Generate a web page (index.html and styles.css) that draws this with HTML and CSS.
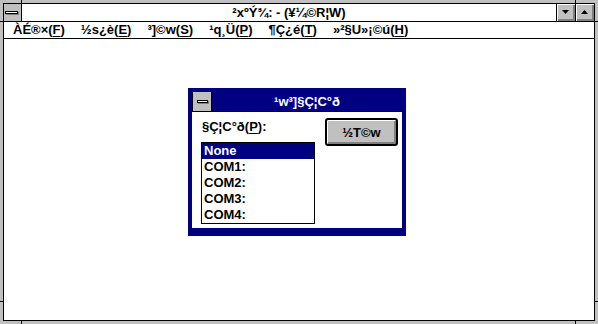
FILE: index.html
```html
<!DOCTYPE html>
<html>
<head>
<meta charset="utf-8">
<link rel="stylesheet" href="styles.css">
</head>
<body>
<div class="screen">
  <div class="window">
    <div class="caption">
      <div class="sysbox"><div class="sysbar"></div></div>
      <div class="title">²xºÝ¾: - (¥¼©R¦W)</div>
      <div class="capbtn">
        <svg width="7" height="4" viewBox="0 0 7 4"><polygon points="0,0 7,0 3.5,4" fill="#000"/></svg>
      </div>
      <div class="capbtn">
        <svg width="7" height="4" viewBox="0 0 7 4"><polygon points="0,4 7,4 3.5,0" fill="#000"/></svg>
      </div>
    </div>
    <div class="menubar">
      <span class="menu-item">ÀÉ®×(<u>F</u>)</span>
      <span class="menu-item">½s¿è(<u>E</u>)</span>
      <span class="menu-item">³]©w(<u>S</u>)</span>
      <span class="menu-item">¹q¸Ü(<u>P</u>)</span>
      <span class="menu-item">¶Ç¿é(<u>T</u>)</span>
      <span class="menu-item">»²§U»¡©ú(<u>H</u>)</span>
    </div>
    <div class="client"></div>
  </div>

  <div class="tick tick-v tick-top tick-l"></div>
  <div class="tick tick-v tick-top tick-r"></div>
  <div class="tick tick-v tick-bottom tick-l"></div>
  <div class="tick tick-v tick-bottom tick-r"></div>
  <div class="tick tick-h tick-left tick-t"></div>
  <div class="tick tick-h tick-left tick-b"></div>
  <div class="tick tick-h tick-right tick-t"></div>
  <div class="tick tick-h tick-right tick-b"></div>

  <div class="dialog">
    <div class="dcaption">
      <div class="dsys"><div class="dsysbar"></div></div>
      <div class="dtitle">¹w³]§Ç¦C°ð</div>
    </div>
    <div class="dbody">
      <div class="dleft">
        <div class="dlabel">§Ç¦C°ð(<u>P</u>):</div>
        <div class="list">
          <div class="item sel">None</div>
          <div class="item">COM1:</div>
          <div class="item">COM2:</div>
          <div class="item">COM3:</div>
          <div class="item">COM4:</div>
        </div>
      </div>
      <div class="okbtn">½T©w</div>
    </div>
  </div>
</div>
</body>
</html>
```

FILE: styles.css
```css
* { box-sizing: border-box; }
body { margin: 0; }

.screen {
  width: 598px;
  height: 324px;
  background: #c0c0c0;
  padding: 3px;
  position: relative;
  overflow: hidden;
  font-family: "Liberation Sans", Arial, sans-serif;
  font-weight: bold;
  font-size: 13px;
  color: #000;
}

.window {
  height: 100%;
  border: 1px solid #000;
  display: flex;
  flex-direction: column;
  background: #fff;
}

.caption {
  height: 18px;
  flex: none;
  display: flex;
  border-bottom: 1px solid #000;
}

.sysbox {
  width: 18px;
  border-right: 1px solid #000;
  background: #c0c0c0;
  display: flex;
  align-items: center;
  padding-left: 1px;
}

.sysbar {
  width: 13px;
  height: 3px;
  border: 1px solid #000;
  background: #fff;
  box-shadow: 1px 1px 0 #808080;
}

.title {
  flex: 1;
  text-align: center;
  line-height: 17px;
  white-space: nowrap;
}

.capbtn {
  width: 19px;
  border-left: 1px solid #000;
  background: #c0c0c0;
  box-shadow: inset 1px 1px #fff, inset -1px -1px #808080, inset -2px -2px #808080;
  display: flex;
  align-items: center;
  justify-content: center;
  padding: 0 1px 1px 0;
}

.capbtn svg { display: block; }

.menubar {
  height: 17px;
  flex: none;
  display: flex;
  border-bottom: 1px solid #000;
  line-height: 15px;
  padding-left: 1px;
  white-space: nowrap;
}

.menu-item { padding: 0 8px; }

u { text-decoration-thickness: 1px; text-underline-offset: 2px; }

.client { flex: 1; background: #fff; }

.tick { position: absolute; background: #000; }
.tick-v { width: 1px; height: 3px; }
.tick-h { width: 3px; height: 1px; }
.tick-top { top: 0; }
.tick-bottom { bottom: 0; }
.tick-left { left: 0; }
.tick-right { right: 0; }
.tick-v.tick-l { left: 21px; }
.tick-v.tick-r { left: 575px; }
.tick-h.tick-t { top: 21px; }
.tick-h.tick-b { top: 301px; }

.dialog {
  position: absolute;
  left: 188px;
  top: 88px;
  width: 218px;
  height: 148px;
  border: 4px solid #000080;
  border-bottom-width: 8px;
  background: #fff;
  display: flex;
  flex-direction: column;
}

.dcaption {
  height: 20px;
  flex: none;
  display: flex;
  border-bottom: 1px solid #000;
}

.dsys {
  width: 20px;
  border-left: 1px solid #000;
  border-right: 1px solid #000;
  background: #c0c0c0;
  display: flex;
  align-items: center;
  justify-content: center;
}

.dsysbar {
  width: 11px;
  height: 3px;
  border: 1px solid #000;
  background: #fff;
  box-shadow: 1px 1px 0 #808080;
}

.dtitle {
  flex: 1;
  background: #000080;
  color: #fff;
  text-align: center;
  line-height: 19px;
  white-space: nowrap;
}

.dbody {
  flex: 1;
  display: flex;
  padding: 7px 4px 0 9px;
}

.dleft {
  display: flex;
  flex-direction: column;
}

.dlabel {
  height: 16px;
  line-height: 16px;
  padding-left: 1px;
  margin-bottom: 7px;
  white-space: nowrap;
}

.list {
  width: 114px;
  height: 82px;
  border: 1px solid #000;
}

.item {
  height: 16px;
  line-height: 16px;
  padding-left: 2px;
}

.item.sel {
  background: #000080;
  color: #fff;
}

.okbtn {
  margin-left: auto;
  margin-top: -1px;
  width: 73px;
  height: 28px;
  border: 2px solid #000;
  border-radius: 3px;
  background: #c0c0c0;
  box-shadow: inset 1px 1px #fff, inset -1px -1px #808080, inset -2px -2px #808080;
  display: flex;
  align-items: center;
  justify-content: center;
  white-space: nowrap;
}
```
